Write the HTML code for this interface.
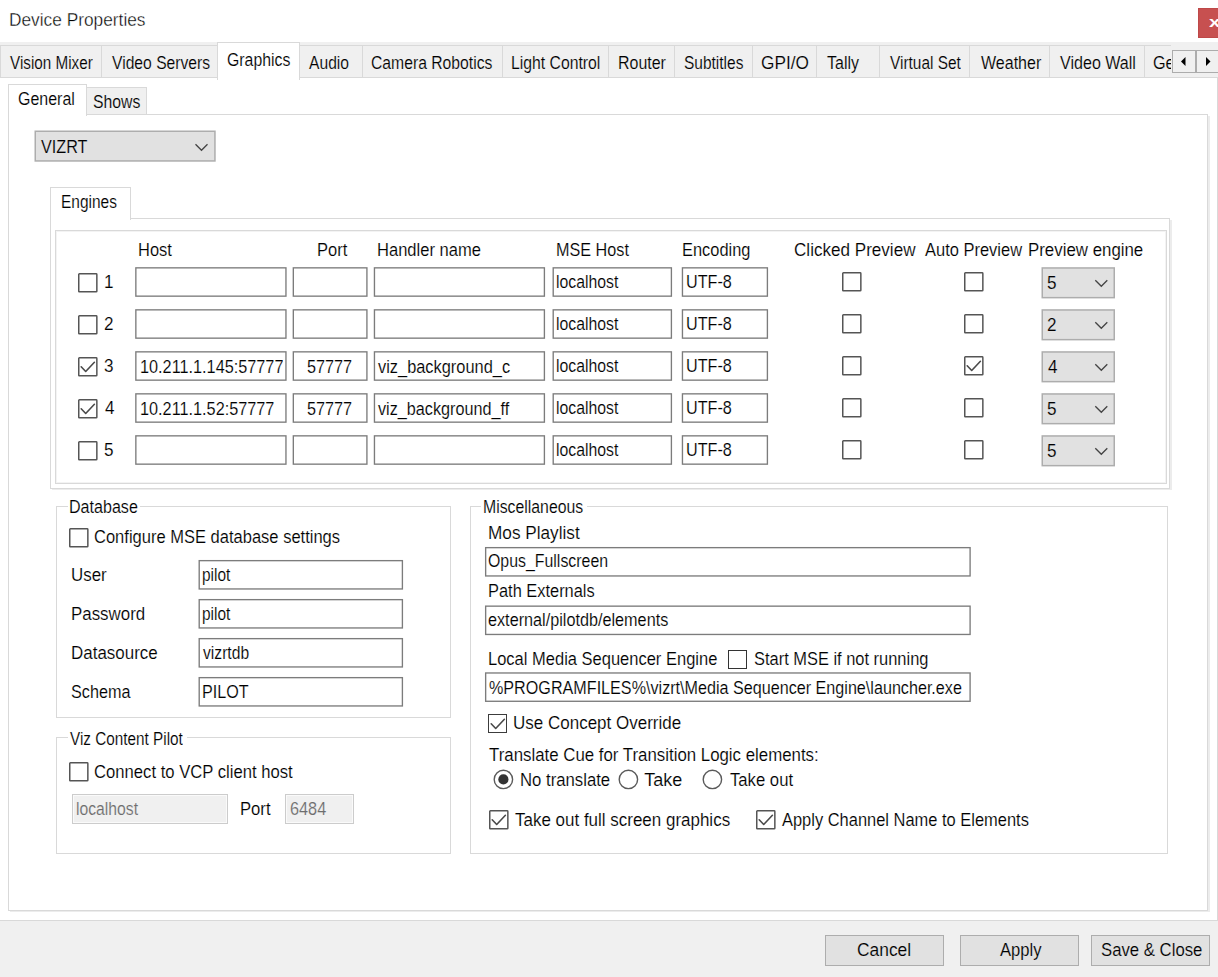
<!DOCTYPE html>
<html lang="en"><head><meta charset="utf-8"><title>Device Properties</title>
<style>
html,body{margin:0;padding:0}
body{width:1218px;height:977px;overflow:hidden;background:#fff;position:relative;font-family:"Liberation Sans",sans-serif;font-size:18px;color:#000}
div{position:absolute}
.t{position:absolute;white-space:pre;line-height:20px;transform-origin:0 0;-webkit-text-stroke:0.15px #fff}
</style></head>
<body>
<div style="left:1198px;top:8px;width:24px;height:30px;background:#c75050;border:1px solid #be4848;box-sizing:border-box;overflow:hidden"><span style="position:absolute;left:9.5px;top:3px;color:#fff;font-weight:bold;font-size:15px;line-height:20px;transform:scaleX(1.35);transform-origin:0 0">x</span></div>
<div style="left:0px;top:42px;width:1218px;height:36px;background:#f0f0f0"></div>
<div style="left:0px;top:921px;width:1218px;height:56px;background:#f0f0f0"></div>
<div style="left:0px;top:920px;width:1218px;height:1px;background:#d9d9d9"></div>
<div style="left:1217px;top:77px;width:1px;height:844px;background:#d9d9d9"></div>
<div style="left:0px;top:77px;width:1218px;height:1px;background:#d9d9d9"></div>
<div style="left:0px;top:45px;width:1171px;height:1px;background:#d9d9d9"></div>
<div style="left:0px;top:45px;width:1px;height:33px;background:#d9d9d9"></div>
<div style="left:101px;top:45px;width:1px;height:33px;background:#d9d9d9"></div>
<div style="left:362px;top:45px;width:1px;height:33px;background:#d9d9d9"></div>
<div style="left:502px;top:45px;width:1px;height:33px;background:#d9d9d9"></div>
<div style="left:608px;top:45px;width:1px;height:33px;background:#d9d9d9"></div>
<div style="left:674px;top:45px;width:1px;height:33px;background:#d9d9d9"></div>
<div style="left:752px;top:45px;width:1px;height:33px;background:#d9d9d9"></div>
<div style="left:816px;top:45px;width:1px;height:33px;background:#d9d9d9"></div>
<div style="left:879px;top:45px;width:1px;height:33px;background:#d9d9d9"></div>
<div style="left:969px;top:45px;width:1px;height:33px;background:#d9d9d9"></div>
<div style="left:1049px;top:45px;width:1px;height:33px;background:#d9d9d9"></div>
<div style="left:1144px;top:45px;width:1px;height:33px;background:#d9d9d9"></div>
<div style="left:217px;top:42px;width:83px;height:38px;background:#fff;border:1px solid #d9d9d9;border-bottom:none;box-sizing:border-box"></div>
<div style="left:1171px;top:45px;width:47px;height:32px;background:#f0f0f0"></div>
<div style="left:1172px;top:50px;width:24px;height:23px;background:#f0f0f0;border:1px solid #acacac;box-sizing:border-box"><svg width="24" height="24" style="position:absolute;left:-1px;top:-1px"><polygon points="9,11.5 13.5,7 13.5,16" fill="#000"/></svg></div>
<div style="left:1196px;top:50px;width:24px;height:23px;background:#f0f0f0;border:1px solid #acacac;box-sizing:border-box"><svg width="24" height="24" style="position:absolute;left:-1px;top:-1px"><polygon points="14.5,11.5 10,7 10,16" fill="#000"/></svg></div>
<div style="left:1150px;top:50px;width:21px;height:26px;overflow:hidden"><span class="t" style="left:3px;top:2.5px;transform:scaleX(.9);-webkit-text-stroke-color:#f0f0f0">Generic</span></div>
<div style="left:8px;top:114px;width:1200px;height:797px;border:1px solid #d9d9d9;box-sizing:border-box;background:#fff"></div>
<div style="left:1208px;top:116px;width:2px;height:796px;background:#ececec"></div>
<div style="left:10px;top:911px;width:1200px;height:1px;background:#ececec"></div>
<div style="left:86px;top:87px;width:61px;height:28px;background:#f0f0f0;border:1px solid #d9d9d9;box-sizing:border-box"></div>
<div style="left:8px;top:84px;width:79px;height:32px;background:#fff;border:1px solid #d9d9d9;border-bottom:none;box-sizing:border-box"></div>
<div style="left:34px;top:130px;width:183px;height:33px;"><svg width="183" height="33" style="position:absolute;left:0;top:0"><rect x="1.25" y="1.25" width="179.70" height="29.70" fill="#e1e1e1" stroke="#adadad" stroke-width="1.5"/><polyline points="161.50,14.30 167.50,20.30 173.50,14.30" fill="none" stroke="#444" stroke-width="1.3"/></svg></div>
<div style="left:50px;top:218px;width:1120px;height:271px;border:1px solid #d9d9d9;box-sizing:border-box;background:#fff"></div>
<div style="left:1170px;top:220px;width:2px;height:270px;background:#ececec"></div>
<div style="left:52px;top:489px;width:1120px;height:1px;background:#ececec"></div>
<div style="left:50px;top:187px;width:81px;height:33px;background:#fff;border:1px solid #d9d9d9;border-bottom:none;box-sizing:border-box"></div>
<div style="left:55px;top:230px;width:1112px;height:254px;border:1px solid #d9d9d9;box-sizing:border-box"></div>
<div style="left:56px;top:231px;width:1110px;height:252px;border:1px solid #f3f3f3;box-sizing:border-box"></div>
<div style="left:78px;top:273px;width:20px;height:20px;"><svg width="20" height="20" style="position:absolute;left:0;top:0"><rect x="0.75" y="0.75" width="18.1" height="18.1" rx="0.7" fill="#fff" stroke="#555" stroke-width="1.5"/></svg></div>
<div style="left:135px;top:267px;width:155px;height:32px;"><svg width="155" height="32" style="position:absolute;left:0;top:0"><rect x="0.85" y="0.85" width="150.10" height="28.30" fill="#fff" stroke="#7c7c7c" stroke-width="1.35"/></svg></div>
<div style="left:292px;top:267px;width:78px;height:32px;"><svg width="78" height="32" style="position:absolute;left:0;top:0"><rect x="1.32" y="0.85" width="73.60" height="28.30" fill="#fff" stroke="#7c7c7c" stroke-width="1.35"/></svg></div>
<div style="left:373px;top:267px;width:174px;height:32px;"><svg width="174" height="32" style="position:absolute;left:0;top:0"><rect x="1.45" y="0.85" width="169.95" height="28.30" fill="#fff" stroke="#7c7c7c" stroke-width="1.35"/></svg></div>
<div style="left:552px;top:267px;width:123px;height:32px;"><svg width="123" height="32" style="position:absolute;left:0;top:0"><rect x="1.20" y="0.85" width="118.20" height="28.30" fill="#fff" stroke="#7c7c7c" stroke-width="1.35"/></svg></div>
<div style="left:681px;top:267px;width:89px;height:32px;"><svg width="89" height="32" style="position:absolute;left:0;top:0"><rect x="1.45" y="0.85" width="84.95" height="28.30" fill="#fff" stroke="#7c7c7c" stroke-width="1.35"/></svg></div>
<div style="left:842px;top:272px;width:20px;height:20px;"><svg width="20" height="20" style="position:absolute;left:0;top:0"><rect x="0.75" y="0.75" width="18.1" height="18.1" rx="0.7" fill="#fff" stroke="#555" stroke-width="1.5"/></svg></div>
<div style="left:964px;top:272px;width:20px;height:20px;"><svg width="20" height="20" style="position:absolute;left:0;top:0"><rect x="0.75" y="0.75" width="18.1" height="18.1" rx="0.7" fill="#fff" stroke="#555" stroke-width="1.5"/></svg></div>
<div style="left:1041px;top:267px;width:76px;height:33px;"><svg width="76" height="33" style="position:absolute;left:0;top:0"><rect x="1.25" y="0.95" width="72.00" height="29.70" fill="#e1e1e1" stroke="#adadad" stroke-width="1.5"/><polyline points="54.30,13.30 60.30,19.30 66.30,13.30" fill="none" stroke="#444" stroke-width="1.3"/></svg></div>
<div style="left:78px;top:315px;width:20px;height:20px;"><svg width="20" height="20" style="position:absolute;left:0;top:0"><rect x="0.75" y="0.75" width="18.1" height="18.1" rx="0.7" fill="#fff" stroke="#555" stroke-width="1.5"/></svg></div>
<div style="left:135px;top:309px;width:155px;height:32px;"><svg width="155" height="32" style="position:absolute;left:0;top:0"><rect x="0.85" y="0.85" width="150.10" height="28.30" fill="#fff" stroke="#7c7c7c" stroke-width="1.35"/></svg></div>
<div style="left:292px;top:309px;width:78px;height:32px;"><svg width="78" height="32" style="position:absolute;left:0;top:0"><rect x="1.32" y="0.85" width="73.60" height="28.30" fill="#fff" stroke="#7c7c7c" stroke-width="1.35"/></svg></div>
<div style="left:373px;top:309px;width:174px;height:32px;"><svg width="174" height="32" style="position:absolute;left:0;top:0"><rect x="1.45" y="0.85" width="169.95" height="28.30" fill="#fff" stroke="#7c7c7c" stroke-width="1.35"/></svg></div>
<div style="left:552px;top:309px;width:123px;height:32px;"><svg width="123" height="32" style="position:absolute;left:0;top:0"><rect x="1.20" y="0.85" width="118.20" height="28.30" fill="#fff" stroke="#7c7c7c" stroke-width="1.35"/></svg></div>
<div style="left:681px;top:309px;width:89px;height:32px;"><svg width="89" height="32" style="position:absolute;left:0;top:0"><rect x="1.45" y="0.85" width="84.95" height="28.30" fill="#fff" stroke="#7c7c7c" stroke-width="1.35"/></svg></div>
<div style="left:842px;top:314px;width:20px;height:20px;"><svg width="20" height="20" style="position:absolute;left:0;top:0"><rect x="0.75" y="0.75" width="18.1" height="18.1" rx="0.7" fill="#fff" stroke="#555" stroke-width="1.5"/></svg></div>
<div style="left:964px;top:314px;width:20px;height:20px;"><svg width="20" height="20" style="position:absolute;left:0;top:0"><rect x="0.75" y="0.75" width="18.1" height="18.1" rx="0.7" fill="#fff" stroke="#555" stroke-width="1.5"/></svg></div>
<div style="left:1041px;top:309px;width:76px;height:33px;"><svg width="76" height="33" style="position:absolute;left:0;top:0"><rect x="1.25" y="0.95" width="72.00" height="29.70" fill="#e1e1e1" stroke="#adadad" stroke-width="1.5"/><polyline points="54.30,13.30 60.30,19.30 66.30,13.30" fill="none" stroke="#444" stroke-width="1.3"/></svg></div>
<div style="left:78px;top:357px;width:20px;height:20px;"><svg width="20" height="20" style="position:absolute;left:0;top:0"><rect x="0.75" y="0.75" width="18.1" height="18.1" rx="0.7" fill="#fff" stroke="#555" stroke-width="1.5"/><polyline points="3.2,9.8 7.7,14.5 16.4,5.3" fill="none" stroke="#4a4a4a" stroke-width="1.6" stroke-linecap="round" stroke-linejoin="round"/></svg></div>
<div style="left:135px;top:351px;width:155px;height:32px;"><svg width="155" height="32" style="position:absolute;left:0;top:0"><rect x="0.85" y="0.85" width="150.10" height="28.30" fill="#fff" stroke="#7c7c7c" stroke-width="1.35"/></svg></div>
<div style="left:292px;top:351px;width:78px;height:32px;"><svg width="78" height="32" style="position:absolute;left:0;top:0"><rect x="1.32" y="0.85" width="73.60" height="28.30" fill="#fff" stroke="#7c7c7c" stroke-width="1.35"/></svg></div>
<div style="left:373px;top:351px;width:174px;height:32px;"><svg width="174" height="32" style="position:absolute;left:0;top:0"><rect x="1.45" y="0.85" width="169.95" height="28.30" fill="#fff" stroke="#7c7c7c" stroke-width="1.35"/></svg></div>
<div style="left:552px;top:351px;width:123px;height:32px;"><svg width="123" height="32" style="position:absolute;left:0;top:0"><rect x="1.20" y="0.85" width="118.20" height="28.30" fill="#fff" stroke="#7c7c7c" stroke-width="1.35"/></svg></div>
<div style="left:681px;top:351px;width:89px;height:32px;"><svg width="89" height="32" style="position:absolute;left:0;top:0"><rect x="1.45" y="0.85" width="84.95" height="28.30" fill="#fff" stroke="#7c7c7c" stroke-width="1.35"/></svg></div>
<div style="left:842px;top:356px;width:20px;height:20px;"><svg width="20" height="20" style="position:absolute;left:0;top:0"><rect x="0.75" y="0.75" width="18.1" height="18.1" rx="0.7" fill="#fff" stroke="#555" stroke-width="1.5"/></svg></div>
<div style="left:964px;top:356px;width:20px;height:20px;"><svg width="20" height="20" style="position:absolute;left:0;top:0"><rect x="0.75" y="0.75" width="18.1" height="18.1" rx="0.7" fill="#fff" stroke="#555" stroke-width="1.5"/><polyline points="3.2,9.8 7.7,14.5 16.4,5.3" fill="none" stroke="#4a4a4a" stroke-width="1.6" stroke-linecap="round" stroke-linejoin="round"/></svg></div>
<div style="left:1041px;top:351px;width:76px;height:33px;"><svg width="76" height="33" style="position:absolute;left:0;top:0"><rect x="1.25" y="0.95" width="72.00" height="29.70" fill="#e1e1e1" stroke="#adadad" stroke-width="1.5"/><polyline points="54.30,13.30 60.30,19.30 66.30,13.30" fill="none" stroke="#444" stroke-width="1.3"/></svg></div>
<div style="left:78px;top:399px;width:20px;height:20px;"><svg width="20" height="20" style="position:absolute;left:0;top:0"><rect x="0.75" y="0.75" width="18.1" height="18.1" rx="0.7" fill="#fff" stroke="#555" stroke-width="1.5"/><polyline points="3.2,9.8 7.7,14.5 16.4,5.3" fill="none" stroke="#4a4a4a" stroke-width="1.6" stroke-linecap="round" stroke-linejoin="round"/></svg></div>
<div style="left:135px;top:393px;width:155px;height:32px;"><svg width="155" height="32" style="position:absolute;left:0;top:0"><rect x="0.85" y="0.85" width="150.10" height="28.30" fill="#fff" stroke="#7c7c7c" stroke-width="1.35"/></svg></div>
<div style="left:292px;top:393px;width:78px;height:32px;"><svg width="78" height="32" style="position:absolute;left:0;top:0"><rect x="1.32" y="0.85" width="73.60" height="28.30" fill="#fff" stroke="#7c7c7c" stroke-width="1.35"/></svg></div>
<div style="left:373px;top:393px;width:174px;height:32px;"><svg width="174" height="32" style="position:absolute;left:0;top:0"><rect x="1.45" y="0.85" width="169.95" height="28.30" fill="#fff" stroke="#7c7c7c" stroke-width="1.35"/></svg></div>
<div style="left:552px;top:393px;width:123px;height:32px;"><svg width="123" height="32" style="position:absolute;left:0;top:0"><rect x="1.20" y="0.85" width="118.20" height="28.30" fill="#fff" stroke="#7c7c7c" stroke-width="1.35"/></svg></div>
<div style="left:681px;top:393px;width:89px;height:32px;"><svg width="89" height="32" style="position:absolute;left:0;top:0"><rect x="1.45" y="0.85" width="84.95" height="28.30" fill="#fff" stroke="#7c7c7c" stroke-width="1.35"/></svg></div>
<div style="left:842px;top:398px;width:20px;height:20px;"><svg width="20" height="20" style="position:absolute;left:0;top:0"><rect x="0.75" y="0.75" width="18.1" height="18.1" rx="0.7" fill="#fff" stroke="#555" stroke-width="1.5"/></svg></div>
<div style="left:964px;top:398px;width:20px;height:20px;"><svg width="20" height="20" style="position:absolute;left:0;top:0"><rect x="0.75" y="0.75" width="18.1" height="18.1" rx="0.7" fill="#fff" stroke="#555" stroke-width="1.5"/></svg></div>
<div style="left:1041px;top:393px;width:76px;height:33px;"><svg width="76" height="33" style="position:absolute;left:0;top:0"><rect x="1.25" y="0.95" width="72.00" height="29.70" fill="#e1e1e1" stroke="#adadad" stroke-width="1.5"/><polyline points="54.30,13.30 60.30,19.30 66.30,13.30" fill="none" stroke="#444" stroke-width="1.3"/></svg></div>
<div style="left:78px;top:441px;width:20px;height:20px;"><svg width="20" height="20" style="position:absolute;left:0;top:0"><rect x="0.75" y="0.75" width="18.1" height="18.1" rx="0.7" fill="#fff" stroke="#555" stroke-width="1.5"/></svg></div>
<div style="left:135px;top:435px;width:155px;height:32px;"><svg width="155" height="32" style="position:absolute;left:0;top:0"><rect x="0.85" y="0.85" width="150.10" height="28.30" fill="#fff" stroke="#7c7c7c" stroke-width="1.35"/></svg></div>
<div style="left:292px;top:435px;width:78px;height:32px;"><svg width="78" height="32" style="position:absolute;left:0;top:0"><rect x="1.32" y="0.85" width="73.60" height="28.30" fill="#fff" stroke="#7c7c7c" stroke-width="1.35"/></svg></div>
<div style="left:373px;top:435px;width:174px;height:32px;"><svg width="174" height="32" style="position:absolute;left:0;top:0"><rect x="1.45" y="0.85" width="169.95" height="28.30" fill="#fff" stroke="#7c7c7c" stroke-width="1.35"/></svg></div>
<div style="left:552px;top:435px;width:123px;height:32px;"><svg width="123" height="32" style="position:absolute;left:0;top:0"><rect x="1.20" y="0.85" width="118.20" height="28.30" fill="#fff" stroke="#7c7c7c" stroke-width="1.35"/></svg></div>
<div style="left:681px;top:435px;width:89px;height:32px;"><svg width="89" height="32" style="position:absolute;left:0;top:0"><rect x="1.45" y="0.85" width="84.95" height="28.30" fill="#fff" stroke="#7c7c7c" stroke-width="1.35"/></svg></div>
<div style="left:842px;top:440px;width:20px;height:20px;"><svg width="20" height="20" style="position:absolute;left:0;top:0"><rect x="0.75" y="0.75" width="18.1" height="18.1" rx="0.7" fill="#fff" stroke="#555" stroke-width="1.5"/></svg></div>
<div style="left:964px;top:440px;width:20px;height:20px;"><svg width="20" height="20" style="position:absolute;left:0;top:0"><rect x="0.75" y="0.75" width="18.1" height="18.1" rx="0.7" fill="#fff" stroke="#555" stroke-width="1.5"/></svg></div>
<div style="left:1041px;top:435px;width:76px;height:33px;"><svg width="76" height="33" style="position:absolute;left:0;top:0"><rect x="1.25" y="0.95" width="72.00" height="29.70" fill="#e1e1e1" stroke="#adadad" stroke-width="1.5"/><polyline points="54.30,13.30 60.30,19.30 66.30,13.30" fill="none" stroke="#444" stroke-width="1.3"/></svg></div>
<div style="left:137px;top:353px;width:146px;height:26px;overflow:hidden"><span class="t" style="left:3.10px;top:3.5px;transform:scaleX(0.9031)">10.211.1.145:57777</span></div>
<div style="left:56px;top:506px;width:395px;height:212px;border:1px solid #d9d9d9;box-sizing:border-box"></div>
<div style="left:68px;top:506px;width:72px;height:1px;background:#fff"></div>
<div style="left:56px;top:737px;width:395px;height:117px;border:1px solid #d9d9d9;box-sizing:border-box"></div>
<div style="left:68px;top:737px;width:119px;height:1px;background:#fff"></div>
<div style="left:470px;top:506px;width:698px;height:348px;border:1px solid #d9d9d9;box-sizing:border-box"></div>
<div style="left:481px;top:506px;width:106px;height:1px;background:#fff"></div>
<div style="left:69px;top:528px;width:20px;height:20px;"><svg width="20" height="20" style="position:absolute;left:0;top:0"><rect x="0.75" y="0.75" width="18.1" height="18.1" rx="0.7" fill="#fff" stroke="#555" stroke-width="1.5"/></svg></div>
<div style="left:198px;top:559px;width:208px;height:32px;"><svg width="208" height="32" style="position:absolute;left:0;top:0"><rect x="1.20" y="1.65" width="203.20" height="28.30" fill="#fff" stroke="#7c7c7c" stroke-width="1.35"/></svg></div>
<div style="left:198px;top:598px;width:208px;height:32px;"><svg width="208" height="32" style="position:absolute;left:0;top:0"><rect x="1.20" y="1.65" width="203.20" height="28.30" fill="#fff" stroke="#7c7c7c" stroke-width="1.35"/></svg></div>
<div style="left:198px;top:637px;width:208px;height:32px;"><svg width="208" height="32" style="position:absolute;left:0;top:0"><rect x="1.20" y="1.65" width="203.20" height="28.30" fill="#fff" stroke="#7c7c7c" stroke-width="1.35"/></svg></div>
<div style="left:198px;top:676px;width:208px;height:32px;"><svg width="208" height="32" style="position:absolute;left:0;top:0"><rect x="1.20" y="1.65" width="203.20" height="28.30" fill="#fff" stroke="#7c7c7c" stroke-width="1.35"/></svg></div>
<div style="left:69px;top:762px;width:20px;height:20px;"><svg width="20" height="20" style="position:absolute;left:0;top:0"><rect x="0.75" y="0.75" width="18.1" height="18.1" rx="0.7" fill="#fff" stroke="#555" stroke-width="1.5"/></svg></div>
<div style="left:72px;top:794px;width:156px;height:30px;background:#f0f0f0;border:1px solid #cccccc;box-sizing:border-box;box-shadow:inset 0 0 0 1px #fafafa"></div>
<div style="left:285px;top:794px;width:69px;height:30px;background:#f0f0f0;border:1px solid #cccccc;box-sizing:border-box;box-shadow:inset 0 0 0 1px #fafafa"></div>
<div style="left:484px;top:546px;width:489px;height:32px;"><svg width="489" height="32" style="position:absolute;left:0;top:0"><rect x="1.65" y="1.65" width="484.45" height="28.30" fill="#fff" stroke="#7c7c7c" stroke-width="1.35"/></svg></div>
<div style="left:484px;top:605px;width:489px;height:32px;"><svg width="489" height="32" style="position:absolute;left:0;top:0"><rect x="1.65" y="1.15" width="484.45" height="28.30" fill="#fff" stroke="#7c7c7c" stroke-width="1.35"/></svg></div>
<div style="left:484px;top:672px;width:489px;height:32px;"><svg width="489" height="32" style="position:absolute;left:0;top:0"><rect x="1.65" y="0.98" width="484.45" height="28.30" fill="#fff" stroke="#7c7c7c" stroke-width="1.35"/></svg></div>
<div style="left:728px;top:650px;width:19px;height:19px;background:#fff;border:1px solid #333;box-sizing:border-box"></div>
<div style="left:488px;top:714px;width:19px;height:19px;background:#fff;border:1px solid #3c3c3c;box-sizing:border-box"><svg width="19" height="19" style="position:absolute;left:-1px;top:-1px"><polyline points="3.2,9.8 7.7,14.5 16.4,5.3" fill="none" stroke="#4a4a4a" stroke-width="1.6" stroke-linecap="round" stroke-linejoin="round"/></svg></div>
<div style="left:493px;top:769px;width:22px;height:22px;"><svg width="22" height="22" style="position:absolute;left:0;top:0"><circle cx="10.4" cy="10.4" r="9.2" fill="#fff" stroke="#5a5a5a" stroke-width="1.4"/><circle cx="10.4" cy="10.4" r="5.1" fill="#333"/></svg></div>
<div style="left:618px;top:769px;width:22px;height:22px;"><svg width="22" height="22" style="position:absolute;left:0;top:0"><circle cx="10.4" cy="10.4" r="9.2" fill="#fff" stroke="#5a5a5a" stroke-width="1.4"/></svg></div>
<div style="left:702px;top:769px;width:22px;height:22px;"><svg width="22" height="22" style="position:absolute;left:0;top:0"><circle cx="10.4" cy="10.4" r="9.2" fill="#fff" stroke="#5a5a5a" stroke-width="1.4"/></svg></div>
<div style="left:489px;top:810px;width:20px;height:20px;"><svg width="20" height="20" style="position:absolute;left:0;top:0"><rect x="0.75" y="0.75" width="18.1" height="18.1" rx="0.7" fill="#fff" stroke="#555" stroke-width="1.5"/><polyline points="3.2,9.8 7.7,14.5 16.4,5.3" fill="none" stroke="#4a4a4a" stroke-width="1.6" stroke-linecap="round" stroke-linejoin="round"/></svg></div>
<div style="left:756px;top:810px;width:20px;height:20px;"><svg width="20" height="20" style="position:absolute;left:0;top:0"><rect x="0.75" y="0.75" width="18.1" height="18.1" rx="0.7" fill="#fff" stroke="#555" stroke-width="1.5"/><polyline points="3.2,9.8 7.7,14.5 16.4,5.3" fill="none" stroke="#4a4a4a" stroke-width="1.6" stroke-linecap="round" stroke-linejoin="round"/></svg></div>
<div style="left:825px;top:935px;width:119px;height:31px;background:#e1e1e1;border:1px solid #adadad;box-sizing:border-box"></div>
<div style="left:960px;top:935px;width:119px;height:31px;background:#e1e1e1;border:1px solid #adadad;box-sizing:border-box"></div>
<div style="left:1091px;top:935px;width:119px;height:31px;background:#e1e1e1;border:1px solid #adadad;box-sizing:border-box"></div>
<span class="t" style="left:9.04px;top:10.00px;transform:scaleX(0.9610);-webkit-text-stroke-width:0.35px;">Device Properties</span>
<span class="t" style="left:9.50px;top:52.50px;transform:scaleX(0.8469);-webkit-text-stroke-color:#f0f0f0;">Vision Mixer</span>
<span class="t" style="left:111.50px;top:52.50px;transform:scaleX(0.8705);-webkit-text-stroke-color:#f0f0f0;">Video Servers</span>
<span class="t" style="left:227.12px;top:50.00px;transform:scaleX(0.8803);">Graphics</span>
<span class="t" style="left:308.70px;top:52.50px;transform:scaleX(0.8689);-webkit-text-stroke-color:#f0f0f0;">Audio</span>
<span class="t" style="left:371.13px;top:52.50px;transform:scaleX(0.8732);-webkit-text-stroke-color:#f0f0f0;">Camera Robotics</span>
<span class="t" style="left:511.12px;top:52.50px;transform:scaleX(0.8750);-webkit-text-stroke-color:#f0f0f0;">Light Control</span>
<span class="t" style="left:618.11px;top:52.50px;transform:scaleX(0.8868);-webkit-text-stroke-color:#f0f0f0;">Router</span>
<span class="t" style="left:684.14px;top:52.50px;transform:scaleX(0.8603);-webkit-text-stroke-color:#f0f0f0;">Subtitles</span>
<span class="t" style="left:761.04px;top:52.50px;transform:scaleX(0.9583);-webkit-text-stroke-color:#f0f0f0;">GPI/O</span>
<span class="t" style="left:827.00px;top:52.50px;transform:scaleX(0.8889);-webkit-text-stroke-color:#f0f0f0;">Tally</span>
<span class="t" style="left:890.00px;top:52.50px;transform:scaleX(0.8554);-webkit-text-stroke-color:#f0f0f0;">Virtual Set</span>
<span class="t" style="left:980.50px;top:52.50px;transform:scaleX(0.8897);-webkit-text-stroke-color:#f0f0f0;">Weather</span>
<span class="t" style="left:1060.00px;top:52.50px;transform:scaleX(0.8929);-webkit-text-stroke-color:#f0f0f0;">Video Wall</span>
<span class="t" style="left:18.11px;top:88.50px;transform:scaleX(0.8871);">General</span>
<span class="t" style="left:92.62px;top:91.50px;transform:scaleX(0.8774);-webkit-text-stroke-color:#f0f0f0;">Shows</span>
<span class="t" style="left:40.75px;top:136.50px;transform:scaleX(0.8990);-webkit-text-stroke-color:#e1e1e1;">VIZRT</span>
<span class="t" style="left:61.14px;top:192.00px;transform:scaleX(0.8594);">Engines</span>
<span class="t" style="left:138.49px;top:240.20px;transform:scaleX(0.9139);">Host</span>
<span class="t" style="left:316.73px;top:240.20px;transform:scaleX(0.9172);">Port</span>
<span class="t" style="left:377.08px;top:240.20px;transform:scaleX(0.9189);">Handler name</span>
<span class="t" style="left:555.60px;top:240.20px;transform:scaleX(0.9000);">MSE Host</span>
<span class="t" style="left:682.09px;top:240.20px;transform:scaleX(0.9110);">Encoding</span>
<span class="t" style="left:793.55px;top:240.20px;transform:scaleX(0.9488);">Clicked Preview</span>
<span class="t" style="left:925.00px;top:240.20px;transform:scaleX(0.9151);">Auto Preview</span>
<span class="t" style="left:1027.76px;top:240.20px;transform:scaleX(0.9364);">Preview engine</span>
<span class="t" style="left:103.55px;top:272.00px;transform:scaleX(0.9500);">1</span>
<span class="t" style="left:556.12px;top:272.00px;transform:scaleX(0.8786);">localhost</span>
<span class="t" style="left:686.10px;top:272.00px;transform:scaleX(0.8980);">UTF-8</span>
<span class="t" style="left:1047.05px;top:273.30px;transform:scaleX(0.9500);-webkit-text-stroke-color:#e1e1e1;">5</span>
<span class="t" style="left:103.55px;top:314.00px;transform:scaleX(0.9500);">2</span>
<span class="t" style="left:556.12px;top:314.00px;transform:scaleX(0.8786);">localhost</span>
<span class="t" style="left:686.10px;top:314.00px;transform:scaleX(0.8980);">UTF-8</span>
<span class="t" style="left:1047.05px;top:315.30px;transform:scaleX(0.9500);-webkit-text-stroke-color:#e1e1e1;">2</span>
<span class="t" style="left:103.55px;top:356.00px;transform:scaleX(0.9500);">3</span>
<span class="t" style="left:556.12px;top:356.00px;transform:scaleX(0.8786);">localhost</span>
<span class="t" style="left:686.10px;top:356.00px;transform:scaleX(0.8980);">UTF-8</span>
<span class="t" style="left:1048.00px;top:357.30px;transform:scaleX(0.9500);-webkit-text-stroke-color:#e1e1e1;">4</span>
<span class="t" style="left:104.50px;top:398.00px;transform:scaleX(0.9500);">4</span>
<span class="t" style="left:556.12px;top:398.00px;transform:scaleX(0.8786);">localhost</span>
<span class="t" style="left:686.10px;top:398.00px;transform:scaleX(0.8980);">UTF-8</span>
<span class="t" style="left:1047.05px;top:399.30px;transform:scaleX(0.9500);-webkit-text-stroke-color:#e1e1e1;">5</span>
<span class="t" style="left:103.55px;top:440.00px;transform:scaleX(0.9500);">5</span>
<span class="t" style="left:556.12px;top:440.00px;transform:scaleX(0.8786);">localhost</span>
<span class="t" style="left:686.10px;top:440.00px;transform:scaleX(0.8980);">UTF-8</span>
<span class="t" style="left:1047.05px;top:441.30px;transform:scaleX(0.9500);-webkit-text-stroke-color:#e1e1e1;">5</span>
<span class="t" style="left:307.10px;top:356.50px;transform:scaleX(0.9010);">57777</span>
<span class="t" style="left:307.10px;top:398.50px;transform:scaleX(0.9010);">57777</span>
<span class="t" style="left:140.10px;top:398.50px;transform:scaleX(0.9031);">10.211.1.52:57777</span>
<span class="t" style="left:377.50px;top:356.50px;transform:scaleX(0.9103);">viz_background_c</span>
<span class="t" style="left:377.50px;top:398.50px;transform:scaleX(0.9007);">viz_background_ff</span>
<span class="t" style="left:69.11px;top:497.00px;transform:scaleX(0.8933);">Database</span>
<span class="t" style="left:94.08px;top:527.20px;transform:scaleX(0.9176);">Configure MSE database settings</span>
<span class="t" style="left:70.56px;top:564.60px;transform:scaleX(0.9392);">User</span>
<span class="t" style="left:201.64px;top:564.60px;transform:scaleX(0.8594);">pilot</span>
<span class="t" style="left:70.56px;top:603.60px;transform:scaleX(0.9383);">Password</span>
<span class="t" style="left:201.64px;top:603.60px;transform:scaleX(0.8594);">pilot</span>
<span class="t" style="left:70.56px;top:642.60px;transform:scaleX(0.9417);">Datasource</span>
<span class="t" style="left:203.00px;top:642.60px;transform:scaleX(0.8702);">vizrtdb</span>
<span class="t" style="left:70.60px;top:681.80px;transform:scaleX(0.9000);">Schema</span>
<span class="t" style="left:202.10px;top:681.80px;transform:scaleX(0.8971);">PILOT</span>
<span class="t" style="left:70.00px;top:728.50px;transform:scaleX(0.8496);">Viz Content Pilot</span>
<span class="t" style="left:94.07px;top:761.50px;transform:scaleX(0.9252);">Connect to VCP client host</span>
<span class="t" style="left:76.33px;top:798.50px;transform:scaleX(0.8729);color:#6d6d6d;-webkit-text-stroke-color:#f0f0f0;">localhost</span>
<span class="t" style="left:240.07px;top:798.50px;transform:scaleX(0.9250);">Port</span>
<span class="t" style="left:289.60px;top:798.50px;transform:scaleX(0.9038);color:#6d6d6d;-webkit-text-stroke-color:#f0f0f0;">6484</span>
<span class="t" style="left:482.87px;top:497.00px;transform:scaleX(0.8783);">Miscellaneous</span>
<span class="t" style="left:487.79px;top:523.25px;transform:scaleX(0.9553);">Mos Playlist</span>
<span class="t" style="left:487.87px;top:551.25px;transform:scaleX(0.8825);">Opus_Fullscreen</span>
<span class="t" style="left:487.84px;top:581.25px;transform:scaleX(0.9116);">Path Externals</span>
<span class="t" style="left:487.85px;top:610.00px;transform:scaleX(0.9008);">external/pilotdb/elements</span>
<span class="t" style="left:487.83px;top:649.00px;transform:scaleX(0.9167);">Local Media Sequencer Engine</span>
<span class="t" style="left:753.59px;top:648.70px;transform:scaleX(0.9127);">Start MSE if not running</span>
<span class="t" style="left:488.60px;top:677.75px;transform:scaleX(0.8969);">%PROGRAMFILES%\vizrt\Media Sequencer Engine\launcher.exe</span>
<span class="t" style="left:512.86px;top:713.00px;transform:scaleX(0.9443);">Use Concept Override</span>
<span class="t" style="left:488.70px;top:744.70px;transform:scaleX(0.9353);">Translate Cue for Transition Logic elements:</span>
<span class="t" style="left:519.57px;top:770.00px;transform:scaleX(0.9289);">No translate</span>
<span class="t" style="left:644.25px;top:770.00px;transform:scaleX(1.0000);">Take</span>
<span class="t" style="left:729.50px;top:770.00px;transform:scaleX(0.9265);">Take out</span>
<span class="t" style="left:515.00px;top:809.50px;transform:scaleX(0.9430);">Take out full screen graphics</span>
<span class="t" style="left:782.00px;top:809.50px;transform:scaleX(0.9139);">Apply Channel Name to Elements</span>
<span class="t" style="left:857.33px;top:940.00px;transform:scaleX(0.9667);-webkit-text-stroke-color:#e1e1e1;">Cancel</span>
<span class="t" style="left:999.50px;top:940.00px;transform:scaleX(0.9222);-webkit-text-stroke-color:#e1e1e1;">Apply</span>
<span class="t" style="left:1100.57px;top:940.00px;transform:scaleX(0.9299);-webkit-text-stroke-color:#e1e1e1;">Save &amp; Close</span>
</body></html>
